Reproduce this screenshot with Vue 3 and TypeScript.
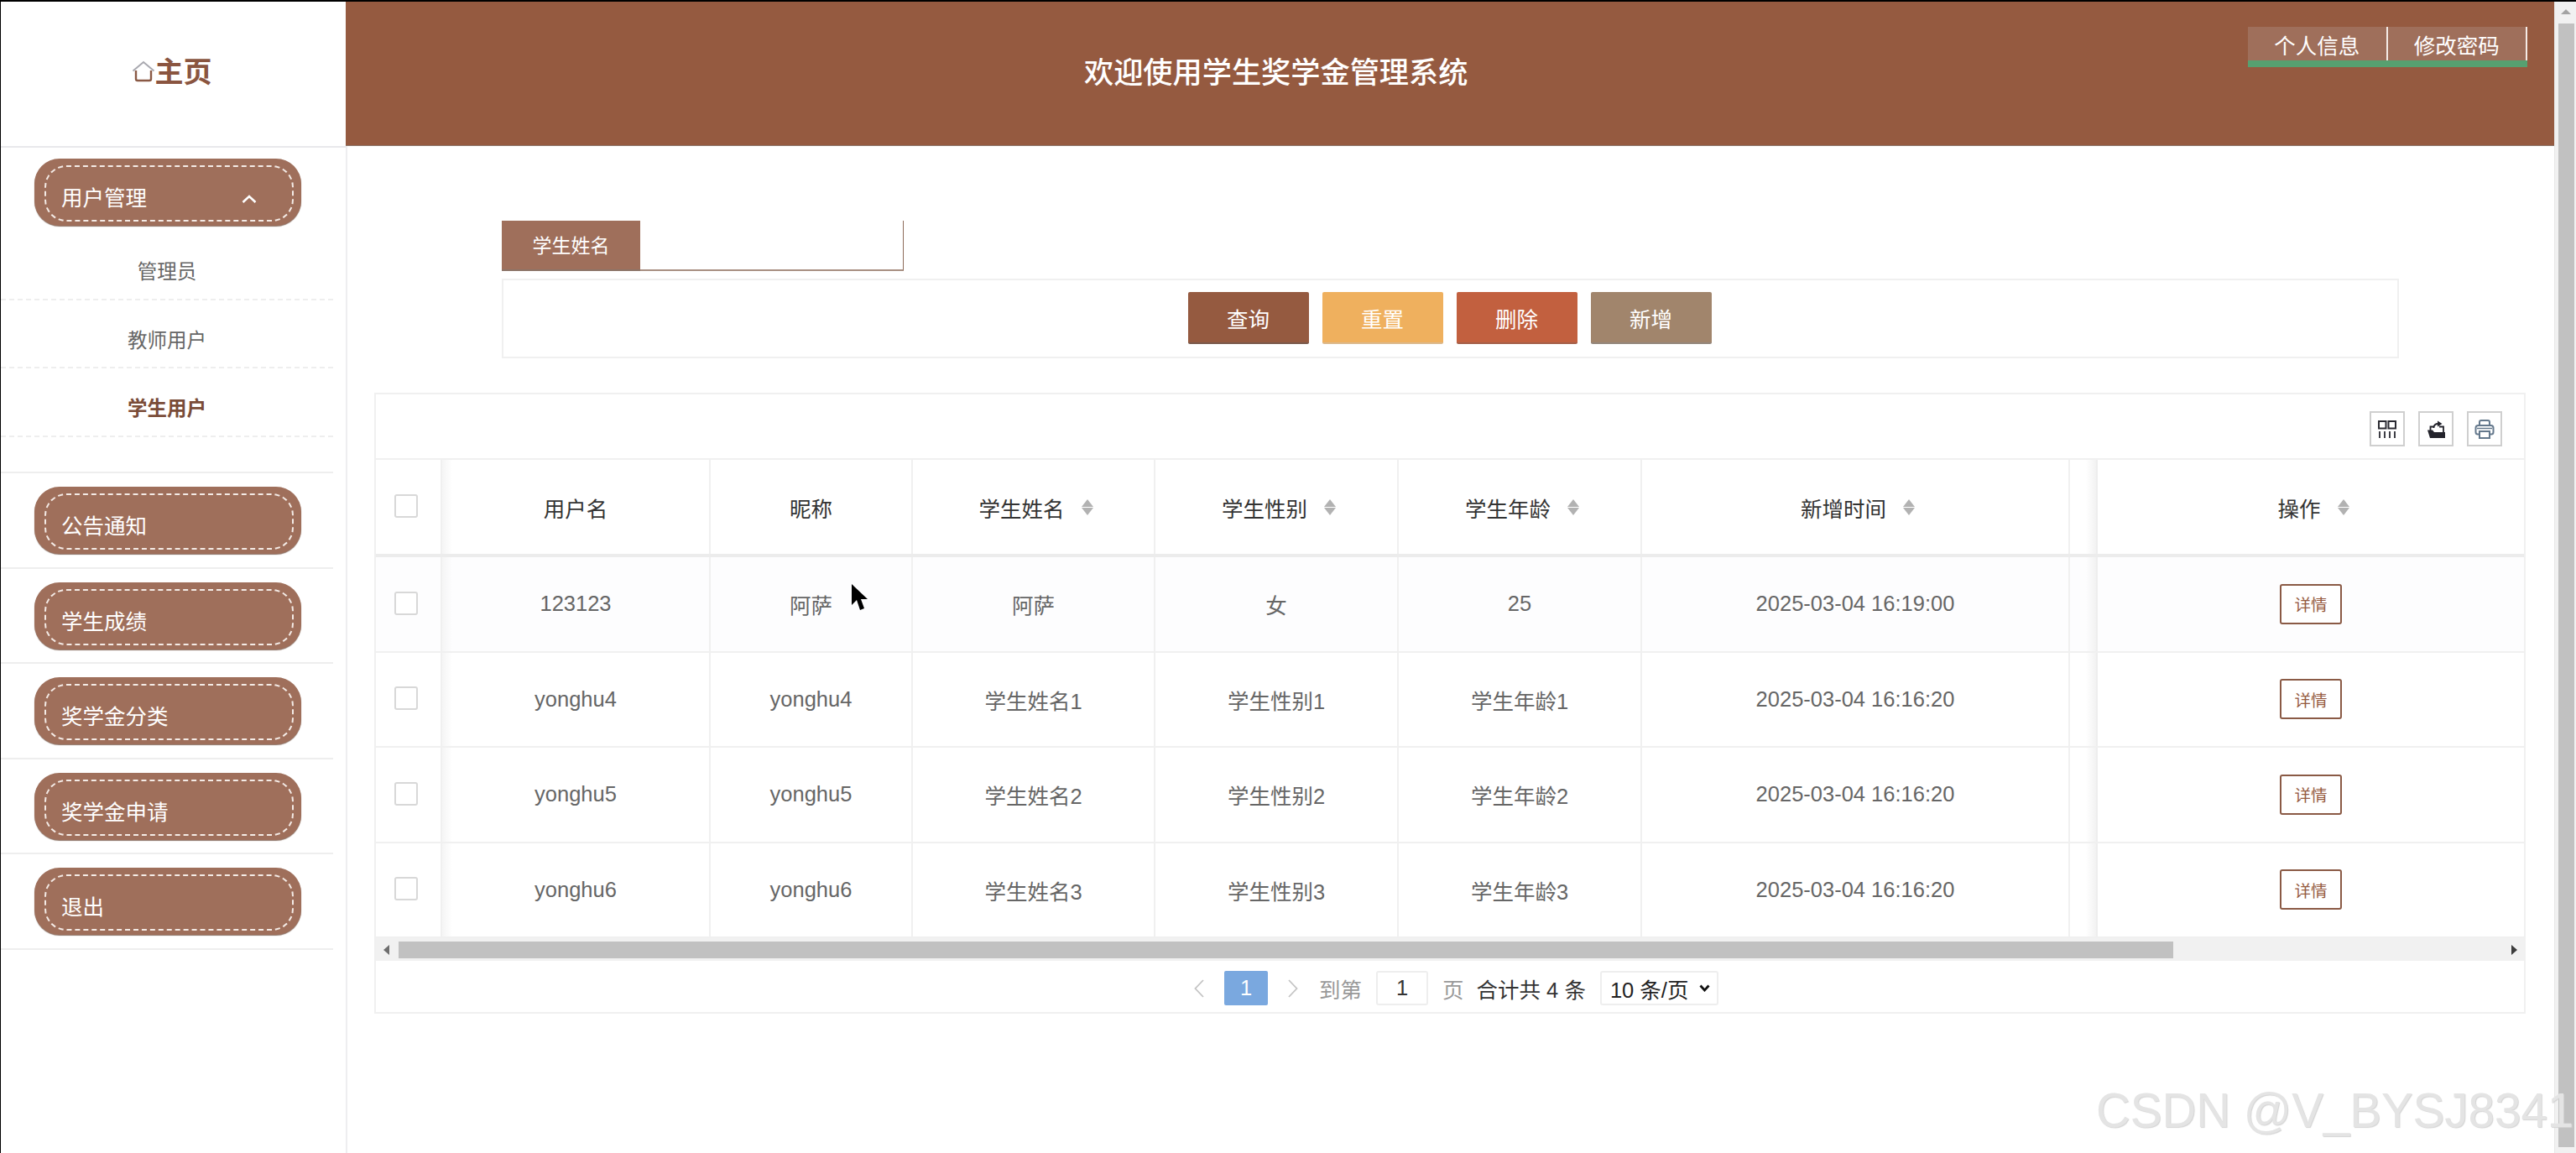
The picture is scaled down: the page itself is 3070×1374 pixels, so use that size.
<template>
  <div class="page">
    <aside class="sidebar">
      <div class="logo">
        <svg class="logo-icon" width="28" height="26" viewBox="0 0 28 26">
          <path d="M1.500 12.500 14 2l12.500 10.500" fill="none" stroke="#a9a9b0" stroke-width="2" />
          <path d="M5 12v10a2 2 0 0 0 2 2h14a2 2 0 0 0 2-2V12" fill="none" stroke="#8a5a45" stroke-width="2.400" />
        </svg>
        <span>主页</span>
      </div>
      <nav>
        <div
          v-for="item in menu"
          :key="item.name"
          class="menu-item"
          :class="{ open: item.children.length > 0 }"
        >
          <div class="pill">
            <div class="pill-inner">
              <span>{{ item.name }}</span>
              <svg
                v-if="item.children.length > 0"
                class="chevron"
                width="18"
                height="10"
                viewBox="0 0 18 10"
              >
                <path d="M1.500 9 9 2l7.500 7" fill="none" stroke="#fff" stroke-width="2.600" />
              </svg>
            </div>
          </div>
          <div
            v-for="child in item.children"
            :key="child"
            class="sub-item"
            :class="{ active: child === '学生用户' }"
          >
            {{ child }}
          </div>
        </div>
      </nav>
    </aside>

    <main class="main">
      <header class="topbar">
        <h1 class="title">欢迎使用学生奖学金管理系统</h1>
        <div class="top-actions">
          <a class="top-btn">个人信息</a>
          <a class="top-btn">修改密码</a>
        </div>
      </header>

      <section class="content">
        <div class="search-field">
          <label>学生姓名</label>
          <div class="search-input"></div>
        </div>
        <div class="search-actions">
          <button
            v-for="b in actions"
            :key="b.label"
            class="action"
            :class="b.cls"
          >
            {{ b.label }}
          </button>
        </div>

        <div class="table-box">
          <div class="toolbar">
            <span class="tool">
              <svg width="22" height="21" viewBox="0 0 22 21">
                <path
                  d="M1 1h8.500v8.500H1zM12.500 1H21v8.500h-8.500z"
                  fill="none"
                  stroke="#2b2b33"
                  stroke-width="2"
                />
                <path d="M2 13v8M8 13v8M14 13v8M20 13v8" stroke="#2b2b33" stroke-width="1.800" />
              </svg>
            </span>
            <span class="tool">
              <svg width="21" height="21" viewBox="0 0 21 21">
                <path d="M0 11.500h6l2 2.500h13v7H3z" fill="#23232b" />
                <path d="M3.500 12V7.500h4M14 7.500h5V14" fill="none" stroke="#23232b" stroke-width="1.800" />
                <path d="M7.500 9c0-3.500 2-5 5.500-5" fill="none" stroke="#23232b" stroke-width="1.800" />
                <path d="M12 .5l5.500 3.500L12 7.500z" fill="#23232b" />
              </svg>
            </span>
            <span class="tool">
              <svg width="24" height="23" viewBox="0 0 24 23">
                <path
                  d="M6 7V3A2 2 0 0 1 8 1h8a2 2 0 0 1 2 2v4M6 17.500H4A2.500 2.500 0 0 1 1.500 15v-5A3 3 0 0 1 4.500 7h15a3 3 0 0 1 3 3v5a2.500 2.500 0 0 1-2.500 2.500h-2"
                  fill="none"
                  stroke="#64788c"
                  stroke-width="2"
                />
                <path d="M6 14h12v8H6z" fill="none" stroke="#64788c" stroke-width="2" />
                <path d="M3 10.500h18" stroke="#64788c" stroke-width="1.500" />
              </svg>
            </span>
          </div>

          <div class="tr head">
            <div class="td"><span class="checkbox"></span></div>
            <div
              v-for="(col, i) in columns"
              :key="col.label"
              class="td"
              :class="{ 'after-fixed': i === 0 }"
            >
              <span>{{ col.label }}</span>
              <span v-if="col.sort" class="sort"></span>
            </div>
            <div class="td before-fixed"></div>
            <div class="td last">
              <span>操作</span>
              <span class="sort"></span>
            </div>
          </div>

          <div
            v-for="(row, r) in rows"
            :key="row[0]"
            class="tr body"
            :class="{ hover: r === 0 }"
          >
            <div class="td"><span class="checkbox"></span></div>
            <div
              v-for="(val, i) in row"
              :key="i"
              class="td"
              :class="{ 'after-fixed': i === 0 }"
            >
              {{ val }}
            </div>
            <div class="td before-fixed"></div>
            <div class="td last"><button class="detail">详情</button></div>
          </div>

          <div class="hscroll">
            <span class="arrow-left"></span>
            <span class="hthumb"></span>
            <span class="arrow-right"></span>
          </div>

          <div class="pager">
            <svg class="pg-arrow" width="12" height="22" viewBox="0 0 12 22">
              <path d="M11 1 1.500 11 11 21" fill="none" stroke="#c4c4c4" stroke-width="1.800" />
            </svg>
            <span class="pg-current">1</span>
            <svg class="pg-arrow next" width="12" height="22" viewBox="0 0 12 22">
              <path d="M1 1l9.500 10L1 21" fill="none" stroke="#c4c4c4" stroke-width="1.800" />
            </svg>
            <span class="pg-muted jump">到第</span>
            <span class="pg-input">1</span>
            <span class="pg-muted">页</span>
            <span class="pg-total">合计共 4 条</span>
            <div class="pg-size">
              <span>10 条/页</span>
              <svg width="13" height="9" viewBox="0 0 13 9">
                <path d="M1.500 1.500 6.500 7l5-5.500" fill="none" stroke="#111" stroke-width="2.800" />
              </svg>
            </div>
          </div>
        </div>
      </section>
    </main>

    <div class="vscroll">
      <span class="arrow-up"></span>
      <span class="vthumb"></span>
    </div>

    <svg class="cursor" width="20" height="32" viewBox="0 0 20 32">
      <path d="M0 0v25l6-6 4 12 5-2-4-11h8z" fill="#000" />
    </svg>
    <div class="watermark">CSDN @V_BYSJ8341</div>
  </div>
</template>

<script setup lang="ts">
interface MenuItem {
  name: string
  children: string[]
}

const menu: MenuItem[] = [
  { name: '用户管理', children: ['管理员', '教师用户', '学生用户'] },
  { name: '公告通知', children: [] },
  { name: '学生成绩', children: [] },
  { name: '奖学金分类', children: [] },
  { name: '奖学金申请', children: [] },
  { name: '退出', children: [] }
]

const actions = [
  { label: '查询', cls: 'query' },
  { label: '重置', cls: 'reset' },
  { label: '删除', cls: 'remove' },
  { label: '新增', cls: 'add' }
]

const columns = [
  { label: '用户名', sort: false },
  { label: '昵称', sort: false },
  { label: '学生姓名', sort: true },
  { label: '学生性别', sort: true },
  { label: '学生年龄', sort: true },
  { label: '新增时间', sort: true }
]

const rows: string[][] = [
  ['123123', '阿萨', '阿萨', '女', '25', '2025-03-04 16:19:00'],
  ['yonghu4', 'yonghu4', '学生姓名1', '学生性别1', '学生年龄1', '2025-03-04 16:16:20'],
  ['yonghu5', 'yonghu5', '学生姓名2', '学生性别2', '学生年龄2', '2025-03-04 16:16:20'],
  ['yonghu6', 'yonghu6', '学生姓名3', '学生性别3', '学生年龄3', '2025-03-04 16:16:20']
]
</script>

<style>
html,
body {
  margin: 0;
  overflow: hidden;
  background: #fff;
}
</style>

<style scoped>
.page {
  position: relative;
  display: flex;
  box-sizing: border-box;
  width: 3070px;
  height: 1374px;
  overflow: hidden;
  border-top: 2px solid #000;
  border-left: 1px solid #000;
  background: #fff;
  font-family: "Liberation Sans", "Noto Sans CJK SC", sans-serif;
  font-size: 25.5px;
  color: #666;
}

/* sidebar */
.sidebar {
  flex: none;
  width: 411px;
}

.logo {
  box-sizing: border-box;
  display: flex;
  align-items: center;
  justify-content: center;
  height: 174px;
  padding: 0 4px 10px 0;
  border-bottom: 2px solid #e8e8ec;
  font-size: 34px;
  font-weight: 700;
  color: #8a5540;
}

.logo-icon {
  margin-top: 4px;
}

.menu-item {
  box-sizing: border-box;
  width: 396px;
  height: 113.500px;
  padding-top: 16px;
  border-bottom: 2px solid #eeeeee;
}

.menu-item.open {
  height: 388px;
  padding-top: 13px;
}

.pill {
  box-sizing: border-box;
  width: 318px;
  height: 80px;
  margin-left: 40px;
  padding: 8px 9px 5px 12px;
  border-radius: 30px;
  background: #9f6f5b;
  box-shadow: 0 1px 1px #8c7468;
}

.pill-inner {
  box-sizing: border-box;
  display: flex;
  align-items: center;
  justify-content: space-between;
  height: 100%;
  padding: 6px 42px 0 18px;
  border: 2px dashed #f4ebe6;
  border-radius: 26px;
  color: #fff;
}

.chevron {
  margin-top: 6px;
}

.sub-item {
  box-sizing: border-box;
  height: 81.500px;
  padding-top: 32px;
  border-bottom: 2px dashed #eeeeee;
  font-size: 23.500px;
  line-height: 32px;
  text-align: center;
}

.pill + .sub-item {
  margin-top: 7px;
}

.sub-item.active {
  font-weight: 700;
  color: #7a4c38;
}

/* main */
.main {
  flex: none;
  display: flex;
  flex-direction: column;
  width: 2632px;
}

.topbar {
  flex: none;
  box-sizing: border-box;
  display: flex;
  height: 172px;
  border-bottom: 1px solid #8c7468;
  background: #955a40;
  color: #fff;
}

.title {
  margin: 0 0 0 880px;
  align-self: center;
  padding-bottom: 9px;
  font-size: 35.200px;
  font-weight: 500;
}

.top-actions {
  box-sizing: border-box;
  display: flex;
  margin: 30px 32px 0 auto;
  height: 48px;
  border-bottom: 8px solid #57a070;
}

.top-btn {
  box-sizing: border-box;
  width: 166.500px;
  height: 40px;
  border-right: 2px solid #f5ebe6;
  background: #9f6f5b;
  line-height: 46px;
  text-align: center;
}

.content {
  flex: 1;
  padding-top: 89px;
  border-left: 2px solid #eeeef0;
}

.search-field {
  box-sizing: border-box;
  display: flex;
  width: 479px;
  height: 60px;
  margin-left: 184px;
}

.search-field label {
  flex: none;
  width: 165px;
  border-bottom: 2px solid #8c7468;
  background: #9f6f5b;
  color: #fff;
  font-size: 23px;
  line-height: 60px;
  text-align: center;
}

.search-input {
  flex: 1;
  border-right: 1px solid #8c6a58;
  border-bottom: 2px solid #a88f82;
}

.search-actions {
  box-sizing: border-box;
  display: flex;
  justify-content: center;
  gap: 16px;
  width: 2261px;
  height: 95px;
  margin: 9px 0 41px 184px;
  padding: 14px 2px 0 0;
  border: 2px solid #f0f0f0;
}

.action {
  box-sizing: border-box;
  width: 144px;
  height: 62px;
  padding: 0;
  border: none;
  border-radius: 2px;
  color: #fff;
  font: inherit;
}

.action.query {
  background: #955a40;
  border-bottom: 2px solid #7a5a4c;
}

.action.reset {
  background: #efb05e;
  border-bottom: 2px solid #dcb98c;
}

.action.remove {
  background: #c2603f;
  border-bottom: 2px solid #a5604a;
}

.action.add {
  background: #a1856c;
  border-bottom: 2px solid #94877c;
}

/* table */
.table-box {
  box-sizing: border-box;
  width: 2564px;
  height: 740px;
  margin-left: 32px;
  border: 2px solid #f0f0f0;
}

.toolbar {
  box-sizing: border-box;
  display: flex;
  justify-content: flex-end;
  gap: 16px;
  height: 78px;
  padding: 20px 26px 0 0;
  border-bottom: 2px solid #f0f0f0;
}

.tool {
  box-sizing: border-box;
  display: flex;
  align-items: center;
  justify-content: center;
  width: 42px;
  height: 42px;
  border: 2px solid #cfcfcf;
}

.tr {
  box-sizing: border-box;
  display: grid;
  grid-template-columns: 79px 320px 241px 289px 290px 290px 510px 33px 508px;
  height: 113.500px;
  border-bottom: 2px solid #f0f0f0;
}

.tr.head {
  height: 116px;
  border-bottom-width: 4px;
  border-bottom-color: #ececec;
  color: #333;
}

.tr.hover {
  background: #fdfdfe;
}

.td {
  box-sizing: border-box;
  display: flex;
  align-items: center;
  justify-content: center;
  border-right: 2px solid #f0f0f0;
}

.td.last {
  border-right: none;
}

.td.after-fixed {
  background: linear-gradient(to right, #f5f5f5, rgba(255, 255, 255, 0) 12px);
}

.td.before-fixed {
  border-right: 2px solid #eeeeee;
  background: linear-gradient(to left, #f2f2f2, rgba(255, 255, 255, 0) 12px);
}

.checkbox {
  box-sizing: border-box;
  width: 28px;
  height: 28px;
  margin: 0 5px 2px 0;
  border: 2px solid #d8d8d8;
  border-radius: 3px;
  background: #fff;
}

.sort {
  position: relative;
  width: 15px;
  height: 19px;
  margin: 0 -7px 0 20px;
}

.sort::before,
.sort::after {
  content: "";
  position: absolute;
  left: 0;
  border-left: 7.500px solid transparent;
  border-right: 7.500px solid transparent;
}

.sort::before {
  top: 0;
  border-bottom: 9px solid #b2b2b2;
}

.sort::after {
  bottom: 0;
  border-top: 9px solid #b2b2b2;
}

.detail {
  box-sizing: border-box;
  width: 74px;
  height: 48px;
  padding: 0;
  border: 2px solid #8a5a45;
  border-radius: 3px;
  background: #fff;
  color: #955a40;
  font: inherit;
  font-size: 19.500px;
}

.hscroll {
  position: relative;
  height: 27px;
  background: #f1f1f1;
}

.hthumb {
  position: absolute;
  top: 4px;
  left: 27px;
  width: 2115px;
  height: 20px;
  background: #c1c1c1;
}

.arrow-left,
.arrow-right {
  position: absolute;
  top: 8px;
  border-top: 6px solid transparent;
  border-bottom: 6px solid transparent;
}

.arrow-left {
  left: 9px;
  border-right: 7px solid #6e6e6e;
}

.arrow-right {
  right: 8px;
  border-left: 7px solid #3c3c3c;
}

.pager {
  display: flex;
  align-items: center;
  justify-content: flex-start;
  gap: 17px;
  height: 41px;
  padding: 12px 0 0 975px;
  color: #333;
}

.pg-arrow {
  margin-right: 7px;
}

.pg-arrow.next {
  margin: 0 8px 0 7px;
}

.pg-current {
  box-sizing: border-box;
  width: 52px;
  height: 41px;
  border-radius: 2px;
  background: #7aa8df;
  color: #fff;
  line-height: 41px;
  text-align: center;
}

.pg-muted {
  color: #999;
}

.pg-input {
  box-sizing: border-box;
  width: 62px;
  height: 41px;
  border: 2px solid #eeeeee;
  border-radius: 3px;
  line-height: 37px;
  text-align: center;
}

.pg-total {
  margin-left: -2px;
}

.pg-size {
  box-sizing: border-box;
  display: flex;
  align-items: center;
  justify-content: space-between;
  width: 141px;
  height: 41px;
  padding: 0 8px 0 10px;
  border: 2px solid #eeeeee;
  border-radius: 3px;
  background: #fff;
  color: #222;
}

/* page scrollbar */
.vscroll {
  position: absolute;
  top: 0;
  right: 0;
  bottom: 0;
  width: 26px;
  border-left: 1px solid #e8e8e8;
  box-sizing: border-box;
  background: #f1f1f1;
}

.arrow-up {
  position: absolute;
  top: 9px;
  left: 7px;
  border-left: 6px solid transparent;
  border-right: 6px solid transparent;
  border-bottom: 6px solid #a3a3a3;
}

.vthumb {
  position: absolute;
  top: 26px;
  left: 4px;
  width: 19px;
  height: 1339px;
  background: #c1c1c1;
}

.cursor {
  position: absolute;
  top: 694px;
  left: 1014px;
}

.watermark {
  position: absolute;
  top: 1282px;
  left: 2497px;
  color: #e4e4e4;
  font-size: 56.500px;
  line-height: 80px;
  white-space: nowrap;
  text-shadow: 1px 1px 1px #d4d4d4;
}
</style>
